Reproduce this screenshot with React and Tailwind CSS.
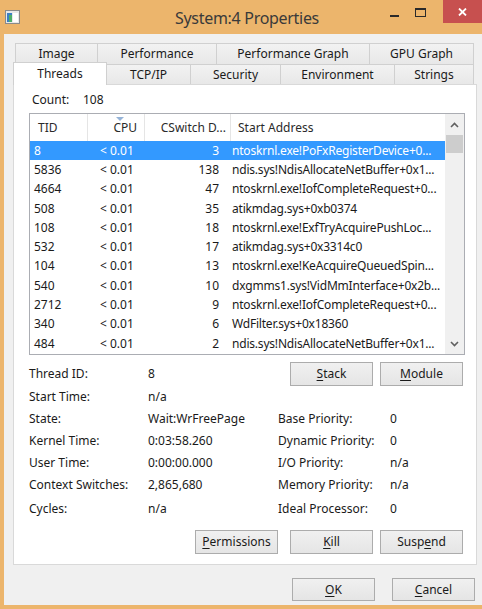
import React from "react";

const rows = [
  ["8", "3", "ntoskrnl.exe!PoFxRegisterDevice+0..."],
  ["5836", "138", "ndis.sys!NdisAllocateNetBuffer+0x1..."],
  ["4664", "47", "ntoskrnl.exe!IofCompleteRequest+0..."],
  ["508", "35", "atikmdag.sys+0xb0374"],
  ["108", "18", "ntoskrnl.exe!ExfTryAcquirePushLoc..."],
  ["532", "17", "atikmdag.sys+0x3314c0"],
  ["104", "13", "ntoskrnl.exe!KeAcquireQueuedSpin..."],
  ["540", "10", "dxgmms1.sys!VidMmInterface+0x2b..."],
  ["2712", "9", "ntoskrnl.exe!IofCompleteRequest+0..."],
  ["340", "6", "WdFilter.sys+0x18360"],
  ["484", "2", "ndis.sys!NdisAllocateNetBuffer+0x1..."],
];

function Btn({ children, className = "" }) {
  return (
    <div
      className={`flex items-center justify-center w-[83px] border border-[#acacac] bg-linear-to-b from-[#f0f0f0] to-[#e5e5e5] text-[12px] text-[#1a1a1a] ${className}`}
    >
      <span>{children}</span>
    </div>
  );
}

function U({ children }) {
  return <span className="underline underline-offset-2 decoration-1">{children}</span>;
}

function Tab({ children, className = "" }) {
  return (
    <div
      className={`flex items-center justify-center border-t border-l border-[#d0d0d0] bg-linear-to-b from-[#f2f2f2] to-[#e8e8e8] text-[12px] text-[#1a1a1a] ${className}`}
    >
      {children}
    </div>
  );
}

function Chevron({ up }) {
  return (
    <svg width="9" height="6" viewBox="0 0 9 6">
      <path
        d={up ? "M1 5 L4.5 1.5 L8 5" : "M1 1 L4.5 4.5 L8 1"}
        fill="none"
        stroke="#606060"
        strokeWidth="1.6"
      />
    </svg>
  );
}

function DRow({ label, value, rlabel, rvalue, className = "" }) {
  return (
    <div className={`flex items-center h-[22px] text-[12px] text-[#1a1a1a] ${className}`}>
      <div className="w-[119px]">{label}</div>
      <div className="w-[130px]">{value}</div>
      <div className="w-[112px]">{rlabel}</div>
      <div>{rvalue}</div>
    </div>
  );
}

export default function App() {
  return (
    <div className="w-[482px] h-[609px] bg-[#ecb56c] flex flex-col overflow-hidden font-['Noto_Sans',sans-serif]">
      {/* Title bar */}
      <div className="h-[34px] flex items-start shrink-0">
        <div className="w-[100px] pl-[5px] pt-[10px]">
          <svg width="15" height="14" viewBox="0 0 15 14">
            <rect x="0.5" y="0.5" width="14" height="13" fill="#e8e8e8" stroke="#8a8a8a" />
            <rect x="2" y="3" width="5" height="9" fill="#3b7fc4" />
            <rect x="4" y="5" width="3" height="7" fill="#4caf6a" />
            <rect x="8" y="3" width="5" height="9" fill="#ffffff" />
          </svg>
        </div>
        <div className="flex-1 text-center text-[16px] tracking-[-0.3px] leading-[36px] text-[#3a3a3a] pl-[12px]">
          System:4 Properties
        </div>
        <div className="w-[100px] flex items-start justify-end">
          <div className="w-[26px] h-[24px] flex items-center justify-center">
            <div className="w-[9px] h-[2px] bg-[#2a2a2a] mt-[8px]"></div>
          </div>
          <div className="w-[26px] h-[24px] flex items-start justify-center pt-[8px] mr-[10px]">
            <div className="w-[11px] h-[9px] border border-[#2a2a2a] border-t-2"></div>
          </div>
          <div className="w-[39px] h-[23px] bg-[#c7504f] flex items-center justify-center">
            <svg width="9" height="8" viewBox="0 0 9 8">
              <path d="M1 0.5 L8 7.5 M8 0.5 L1 7.5" stroke="#ffffff" strokeWidth="1.8" />
            </svg>
          </div>
        </div>
      </div>

      {/* Client */}
      <div className="flex-1 ml-[4px] bg-[#f0f0f0] flex flex-col">
        {/* Tabs */}
        <div className="pt-[9px]">
          <div className="ml-[11px] h-[21px] flex">
            <Tab className="w-[82px]">Image</Tab>
            <Tab className="w-[119px]">Performance</Tab>
            <Tab className="w-[153px]">Performance Graph</Tab>
            <Tab className="w-[105px] border-r">GPU Graph</Tab>
          </div>
          <div className="ml-[9px] h-[20px] flex items-start">
            <div className="relative z-10 -mt-[2px] w-[94px] h-[23px] bg-white border-t border-l border-r border-[#d0d0d0] flex items-start justify-center pt-[2px] text-[12px] text-[#1a1a1a]">
              Threads
            </div>
            <Tab className="w-[83px] h-[20px] border-l-0">TCP/IP</Tab>
            <Tab className="w-[90px] h-[20px]">Security</Tab>
            <Tab className="w-[114px] h-[20px]">Environment</Tab>
            <Tab className="w-[80px] h-[20px] border-r">Strings</Tab>
          </div>
        </div>

        {/* Panel */}
        <div className="ml-[9px] w-[464px] h-[481px] bg-white border border-[#d9d9d9] flex flex-col shrink-0">
          <div className="mt-[7px] h-[16px] flex items-center text-[12px] text-[#1a1a1a] pl-[18px]">
            <span className="w-[51px]">Count:</span>
            <span>108</span>
          </div>

          {/* List view */}
          <div className="mt-[5px] ml-[15px] w-[436px] h-[242px] border border-[#abadb3] flex">
            <div className="w-[415px] flex flex-col overflow-hidden">
              <div className="h-[27px] flex text-[12px] text-[#2a2a2a] shrink-0">
                <div className="w-[58px] border-r border-[#e5e5e5] flex items-center pl-[8px]">TID</div>
                <div className="w-[57px] border-r border-[#e5e5e5] flex flex-col items-end justify-center pr-[7px]">
                  <svg width="8" height="4" viewBox="0 0 8 4" className="mr-[13px] -mt-[4px]">
                    <path d="M0 0 L8 0 L4 4 Z" fill="#95b3d7" />
                  </svg>
                  <span className="leading-[14px]">CPU</span>
                </div>
                <div className="w-[86px] border-r border-[#e5e5e5] flex items-center justify-end pr-[4px] whitespace-nowrap overflow-hidden">
                  CSwitch D...
                </div>
                <div className="flex-1 flex items-center pl-[7px]">Start Address</div>
              </div>
              {rows.map((r, i) => (
                <div
                  key={i}
                  className={`h-[19.3px] flex items-center text-[12px] shrink-0 ${
                    i === 0 ? "bg-[#3399ff] text-white" : "text-[#1a1a1a]"
                  }`}
                >
                  <div className="w-[58px] pl-[4px]">{r[0]}</div>
                  <div className="w-[57px] pl-[12px]">&lt; 0.01</div>
                  <div className="w-[86px] text-right pr-[12px]">{r[1]}</div>
                  <div className="flex-1 pl-[1px] whitespace-nowrap overflow-hidden tracking-[-0.2px]">{r[2]}</div>
                </div>
              ))}
            </div>
            <div className="flex-1 bg-[#f0f0f0] flex flex-col">
              <div className="h-[21px] flex items-center justify-center">
                <Chevron up />
              </div>
              <div className="h-[18px] mx-[1px] bg-[#cdcdcd]"></div>
              <div className="flex-1"></div>
              <div className="h-[21px] flex items-center justify-center">
                <Chevron />
              </div>
            </div>
          </div>

          {/* Details */}
          <div className="mt-[7px] pl-[15px] pr-[13px] flex flex-col">
            <div className="flex items-center h-[24px] text-[12px] text-[#1a1a1a]">
              <div className="w-[119px]">Thread ID:</div>
              <div className="w-[100px]">8</div>
              <div className="ml-auto flex gap-[7px]">
                <Btn className="h-[24px]">
                  <U>S</U>tack
                </Btn>
                <Btn className="h-[24px]">
                  <U>M</U>odule
                </Btn>
              </div>
            </div>
            <DRow label="Start Time:" value="n/a" />
            <DRow label="State:" value="Wait:WrFreePage" rlabel="Base Priority:" rvalue="0" />
            <DRow label="Kernel Time:" value="0:03:58.260" rlabel="Dynamic Priority:" rvalue="0" />
            <DRow label="User Time:" value="0:00:00.000" rlabel="I/O Priority:" rvalue="n/a" />
            <DRow label="Context Switches:" value="2,865,680" rlabel="Memory Priority:" rvalue="n/a" />
            <DRow label="Cycles:" value="n/a" rlabel="Ideal Processor:" rvalue="0" className="mt-[2px]" />
            <div className="mt-[10px] flex justify-end">
              <Btn className="h-[24px]">
                <U>P</U>ermissions
              </Btn>
              <Btn className="h-[24px] ml-[12px]">
                <U>K</U>ill
              </Btn>
              <Btn className="h-[24px] ml-[7px]">
                Susp<U>e</U>nd
              </Btn>
            </div>
          </div>
        </div>

        {/* Bottom buttons */}
        <div className="mt-[13px] flex justify-end pr-[7px] gap-[17px]">
          <Btn className="h-[23px] border-[#3399ff]">
            <U>O</U>K
          </Btn>
          <Btn className="h-[23px]">
            <U>C</U>ancel
          </Btn>
        </div>
      </div>
      <div className="h-[4px] shrink-0"></div>
    </div>
  );
}
